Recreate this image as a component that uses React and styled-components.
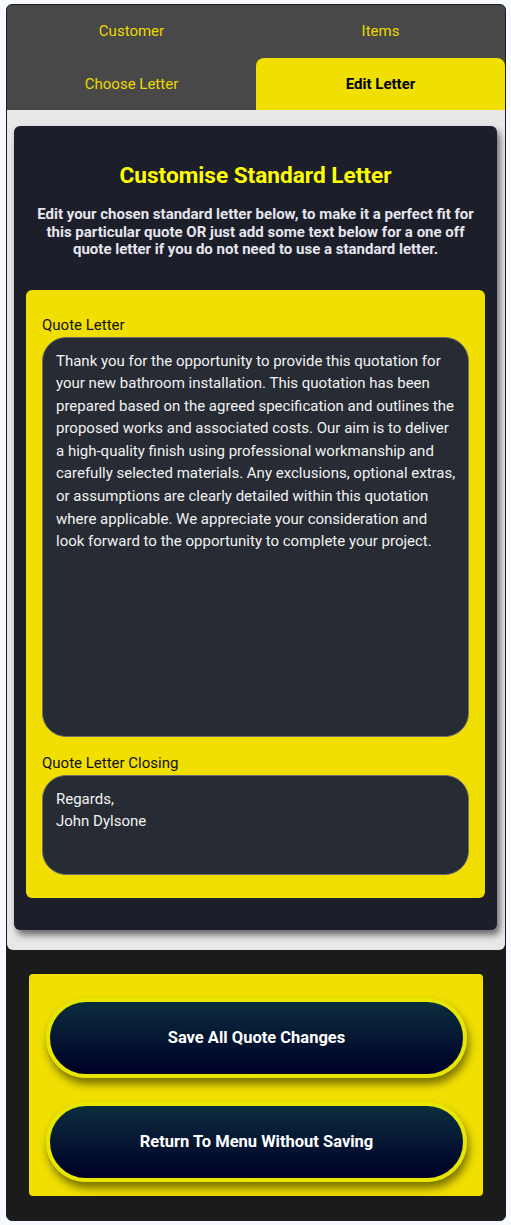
import React from "react";
import styled, { createGlobalStyle } from "styled-components";

// -- -- --

const GlobalStyle = createGlobalStyle`
  :root {
    --yellow: #f0df00;
    --tab-grey: #484848;
    --card-dark: #1c1e2a;
    --field-dark: #272b33;
  }

  * {
    box-sizing: border-box;
  }

  body {
    margin: 0;
    background: #f7fbff;
    font-family: Roboto, "Noto Sans", sans-serif;
  }
`;

const Page = styled.div`
  padding: 4px 5px 4px 6px;
`;

const Shell = styled.div`
  border: 1px solid #1e1e1e;
  border-radius: 6px;
  overflow: hidden;
  background: #1b1b1b;
`;

const TabGrid = styled.div`
  display: grid;
  grid-template-columns: 1fr 1fr;
  grid-auto-rows: 52.5px;
  background: var(--tab-grey);
`;

const Tab = styled.button`
  display: flex;
  align-items: center;
  justify-content: center;
  border: 0;
  padding: 0;
  font-family: inherit;
  font-size: 15px;
  font-weight: ${(p) => (p.$active ? 700 : 400)};
  color: ${(p) => (p.$active ? "#000" : "#ebd900")};
  background: ${(p) => (p.$active ? "var(--yellow)" : "transparent")};
  border-radius: ${(p) => (p.$active ? "8px 8px 0 0" : "0")};
  cursor: pointer;
`;

const Content = styled.div`
  background: #e8e8e8;
  padding: 16px 8px 20px 7px;
  border-radius: 0 0 6px 6px;
`;

const Card = styled.section`
  background: var(--card-dark);
  border-radius: 6px;
  padding: 36px 12px 32px;
  box-shadow: 3px 5px 7px rgba(0, 0, 0, 0.55);
`;

const Title = styled.h2`
  margin: 0;
  text-align: center;
  font-size: 22.6px;
  line-height: 28px;
  font-weight: 700;
  color: #ffff00;
`;

const Intro = styled.p`
  margin: 16px 10px 31px;
  text-align: center;
  font-size: 15px;
  line-height: 17.5px;
  font-weight: 700;
  color: #e6e6ee;
`;

const Panel = styled.div`
  display: flex;
  flex-direction: column;
  gap: 18px;
  background: var(--yellow);
  border-radius: 6px;
  padding: 27px 16px 23px;
`;

const Field = styled.label`
  display: flex;
  flex-direction: column;
  gap: 3px;
  font-size: 15px;
  line-height: 17px;
  color: #111;
`;

const LetterBox = styled.textarea`
  display: block;
  width: 100%;
  height: ${(p) => p.$height}px;
  resize: none;
  margin: 0;
  padding: 12px 12px 11px 13px;
  border: 1px solid #6c6c6c;
  border-radius: 24px;
  background: var(--field-dark);
  color: #f2f2f2;
  font-family: Roboto, "Noto Sans", sans-serif;
  font-size: 15px;
  line-height: 22.6px;
  outline: none;
  overflow: hidden;
`;

const Footer = styled.div`
  padding: 24px 22px 24px 22px;
`;

const ActionBox = styled.div`
  display: flex;
  flex-direction: column;
  gap: 24px;
  background: var(--yellow);
  border-radius: 4px;
  padding: 24px 16px 14px 17px;
`;

const ActionButton = styled.button`
  height: 80px;
  border: 4px solid #e6e600;
  border-radius: 40px;
  background: linear-gradient(to bottom, #0b2d3d, #000028);
  color: #fff;
  font-family: inherit;
  font-size: 16.5px;
  font-weight: 700;
  box-shadow: 2px 6px 8px rgba(0, 0, 0, 0.5);
  cursor: pointer;
`;

// -- -- --

const tabs = [
  { label: "Customer" },
  { label: "Items" },
  { label: "Choose Letter" },
  { label: "Edit Letter", active: true },
];

const letterText =
  "Thank you for the opportunity to provide this quotation for your new bathroom installation. This quotation has been prepared based on the agreed specification and outlines the proposed works and associated costs. Our aim is to deliver a high-quality finish using professional workmanship and carefully selected materials. Any exclusions, optional extras, or assumptions are clearly detailed within this quotation where applicable. We appreciate your consideration and look forward to the opportunity to complete your project.";

const closingText = "Regards,\nJohn Dylsone";

// -- -- --

export default function App() {
  return (
    <Page>
      <GlobalStyle />
      <Shell>
        <TabGrid>
          {tabs.map((tab) => (
            <Tab key={tab.label} $active={tab.active}>
              {tab.label}
            </Tab>
          ))}
        </TabGrid>

        <Content>
          <Card>
            <Title>Customise Standard Letter</Title>
            <Intro>
              Edit your chosen standard letter below, to make it a perfect fit for this particular quote OR just add
              some text below for a one off quote letter if you do not need to use a standard letter.
            </Intro>

            <Panel>
              <Field>
                Quote Letter
                <LetterBox $height={400} defaultValue={letterText} />
              </Field>
              <Field>
                Quote Letter Closing
                <LetterBox $height={100} defaultValue={closingText} />
              </Field>
            </Panel>
          </Card>
        </Content>

        <Footer>
          <ActionBox>
            <ActionButton>Save All Quote Changes</ActionButton>
            <ActionButton>Return To Menu Without Saving</ActionButton>
          </ActionBox>
        </Footer>
      </Shell>
    </Page>
  );
}
